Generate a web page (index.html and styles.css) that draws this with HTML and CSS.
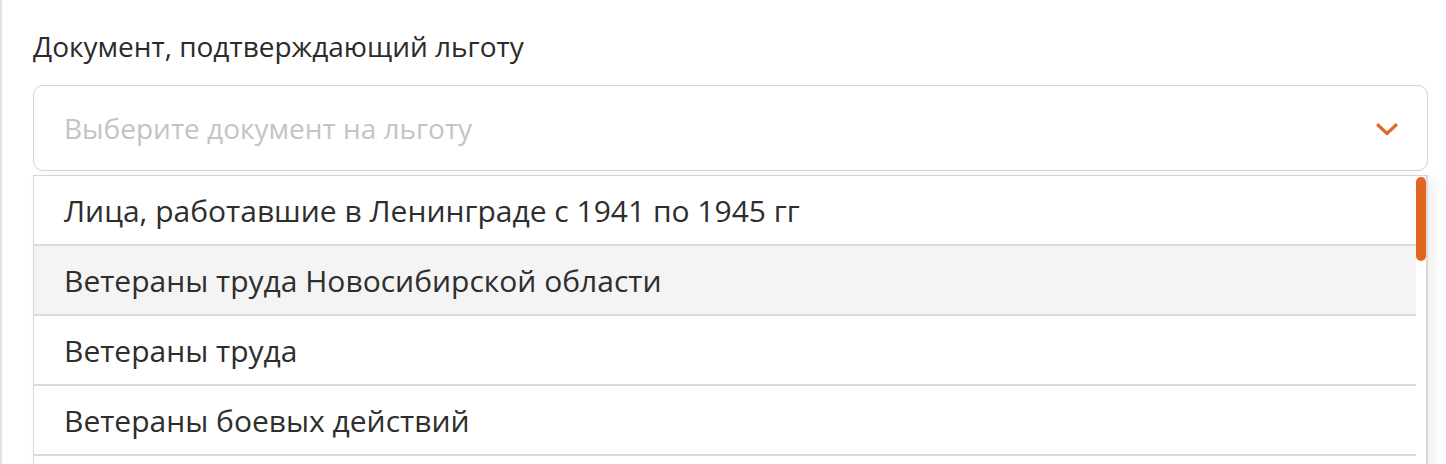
FILE: index.html
```html
<!DOCTYPE html>
<html lang="ru">
<head>
    <meta charset="UTF-8">
    <meta name="viewport" content="width=device-width, initial-scale=1.0">
    <title>Документ на льготу</title>
    <link rel="stylesheet" href="styles.css">
</head>
<body>
    <div class="page">
        <div class="field">
            <label class="field-label">Документ, подтверждающий льготу</label>
            <div class="select">
                <span class="select-placeholder">Выберите документ на льготу</span>
                <svg class="select-arrow" width="24" height="16" viewBox="0 0 24 16">
                    <path d="M3 4 L12 12.5 L21 4" fill="none" stroke="#e2672a" stroke-width="3.2" stroke-linecap="round" stroke-linejoin="round"/>
                </svg>
            </div>
            <div class="dropdown">
                <ul class="options">
                    <li class="option">Лица, работавшие в Ленинграде с 1941 по 1945 гг</li>
                    <li class="option option-hover">Ветераны труда Новосибирской области</li>
                    <li class="option">Ветераны труда</li>
                    <li class="option">Ветераны боевых действий</li>
                </ul>
                <div class="scroll-track">
                    <div class="scroll-thumb"></div>
                </div>
            </div>
        </div>
    </div>
</body>
</html>
```

FILE: styles.css
```css
html, body {
    margin: 0;
    padding: 0;
    height: 100%;
    overflow: hidden;
    background: #fff;
}
body {
    font-family: 'Open Sans', 'Noto Sans', Arial, sans-serif;
    color: #333;
}
.page {
    border-left: 2px solid #e2e2e2;
    padding: 24px 18px 0 31px;
    min-height: 464px;
    box-sizing: border-box;
}
.field-label {
    display: block;
    font-size: 28px;
    line-height: 44px;
    color: #2b2b2b;
    margin-bottom: 17px;
}
.select {
    height: 86px;
    box-sizing: border-box;
    border: 1.5px solid #d3d3d3;
    border-radius: 10px;
    display: flex;
    align-items: center;
    justify-content: space-between;
    padding: 0 28px 0 30px;
}
.select-placeholder {
    font-size: 28px;
    color: #c4c4c4;
}
.select-arrow {
    display: block;
    margin-top: 2px;
}
.dropdown {
    margin-top: 4px;
    display: flex;
    height: 300px;
    border-top: 1px solid #d6d6d6;
    border-left: 1px solid #d6d6d6;
    border-right: 2px solid #d9d9d9;
    box-shadow: 6px 4px 12px rgba(0,0,0,0.07);
    overflow: hidden;
}
.options {
    list-style: none;
    margin: 0;
    padding: 0;
    flex: 1;
}
.option {
    height: 70px;
    box-sizing: border-box;
    border-bottom: 2px solid #dadada;
    padding: 0 0 0 30px;
    display: flex;
    align-items: center;
    font-size: 30px;
    color: #2e2e2e;
}
.option-hover {
    background: #f4f4f4;
}
.scroll-track {
    width: 10px;
    padding-top: 1px;
}
.scroll-thumb {
    height: 84px;
    border-radius: 5px;
    background: #e2661f;
}
```
